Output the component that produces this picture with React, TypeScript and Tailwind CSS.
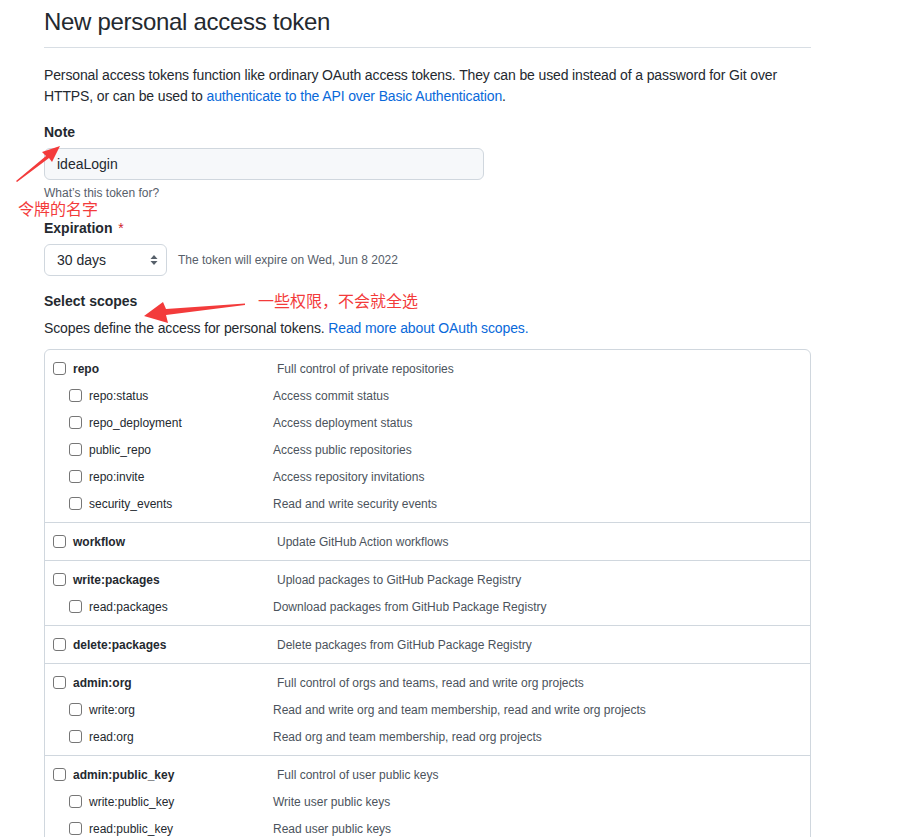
import React from 'react'

type Scope = { name: string; desc: string; children?: { name: string; desc: string }[] }

const scopes: Scope[] = [
  {
    name: 'repo',
    desc: 'Full control of private repositories',
    children: [
      { name: 'repo:status', desc: 'Access commit status' },
      { name: 'repo_deployment', desc: 'Access deployment status' },
      { name: 'public_repo', desc: 'Access public repositories' },
      { name: 'repo:invite', desc: 'Access repository invitations' },
      { name: 'security_events', desc: 'Read and write security events' },
    ],
  },
  { name: 'workflow', desc: 'Update GitHub Action workflows' },
  {
    name: 'write:packages',
    desc: 'Upload packages to GitHub Package Registry',
    children: [{ name: 'read:packages', desc: 'Download packages from GitHub Package Registry' }],
  },
  { name: 'delete:packages', desc: 'Delete packages from GitHub Package Registry' },
  {
    name: 'admin:org',
    desc: 'Full control of orgs and teams, read and write org projects',
    children: [
      { name: 'write:org', desc: 'Read and write org and team membership, read and write org projects' },
      { name: 'read:org', desc: 'Read org and team membership, read org projects' },
    ],
  },
  {
    name: 'admin:public_key',
    desc: 'Full control of user public keys',
    children: [
      { name: 'write:public_key', desc: 'Write user public keys' },
      { name: 'read:public_key', desc: 'Read user public keys' },
    ],
  },
]

function Box() {
  return <span className="inline-block w-[13px] h-[13px] shrink-0 rounded-[3px] border border-[#767676] bg-white" />
}

function ScopeGroup({ scope }: { scope: Scope }) {
  return (
    <div className="py-[5px] border-t border-[#d0d7de] first:border-t-0">
      <div className="flex items-center h-[27px] pl-2">
        <Box />
        <span className="ml-[7px] w-[204px] font-bold text-[12px] text-[#24292f]">{scope.name}</span>
        <span className="text-[12px] text-[#4b535c]">{scope.desc}</span>
      </div>
      {scope.children?.map((c) => (
        <div key={c.name} className="flex items-center h-[27px] pl-6">
          <Box />
          <span className="ml-[7px] w-[184px] text-[12px] text-[#24292f]">{c.name}</span>
          <span className="text-[12px] text-[#4b535c]">{c.desc}</span>
        </div>
      ))}
    </div>
  )
}

export default function App() {
  return (
    <div
      className="relative w-[913px] h-[837px] overflow-hidden bg-white text-[#24292f]"
      style={{ fontFamily: '"Liberation Sans", "Noto Sans CJK SC", sans-serif' }}
    >
      <div className="ml-[44px] w-[767px] pt-[7px]">
        <h1 className="text-[24px] leading-[30px] font-normal tracking-[-0.3px] pb-[10px] border-b border-[#d8dee4]">
          New personal access token
        </h1>
        <p className="mt-[17px] text-[14px] leading-[21px] tracking-[-0.13px]">
          Personal access tokens function like ordinary OAuth access tokens. They can be used instead of a password for Git over
          HTTPS, or can be used to <span className="text-[#0969da]">authenticate to the API over Basic Authentication</span>.
        </p>

        <div className="mt-[15px] text-[14px] leading-[21px] font-bold">Note</div>
        <div className="mt-[5px] w-[440px] h-[32px] rounded-md border border-[#d0d7de] bg-[#f6f8fa] flex items-center px-3 text-[14px]">
          ideaLogin
        </div>
        <div className="mt-1 text-[12px] leading-[18px] text-[#57606a]">What’s this token for?</div>

        <div className="mt-4 text-[14px] leading-[21px] font-bold">
          Expiration <span className="ml-[2px] font-normal text-[#cf222e]">*</span>
        </div>
        <div className="mt-[5px] flex items-center">
          <div className="w-[123px] h-[32px] rounded-md border border-[#d0d7de] bg-white flex items-center justify-between pl-3 pr-[8px] text-[14px]">
            <span>30 days</span>
            <svg width="8" height="12" viewBox="0 0 8 12">
              <path d="M4 1 L7.5 5 L0.5 5 Z M4 11 L7.5 7 L0.5 7 Z" fill="#57606a" />
            </svg>
          </div>
          <span className="ml-[11px] text-[12px] text-[#57606a]">The token will expire on Wed, Jun 8 2022</span>
        </div>

        <div className="mt-[15px] text-[14px] leading-[21px] font-bold">Select scopes</div>
        <p className="mt-[6px] text-[14px] leading-[21px] tracking-[-0.13px]">
          Scopes define the access for personal tokens. <span className="text-[#0969da]">Read more about OAuth scopes.</span>
        </p>

        <div className="mt-[10px] rounded-md border border-[#d0d7de]">
          {scopes.map((s) => (
            <ScopeGroup key={s.name} scope={s} />
          ))}
        </div>
      </div>

      <span className="absolute left-[18px] top-[200px] text-[16px] leading-[20px] text-[#f33b3b]">令牌的名字</span>
      <span className="absolute left-[258px] top-[292px] text-[16px] leading-[20px] text-[#f33b3b]">一些权限，不会就全选</span>

      <svg className="absolute left-0 top-0 pointer-events-none" width="913" height="837">
        <polygon points="16,181 46,156 42,152 60,146 52,162 49,158 17,182" fill="#f33b3b" />
        <polygon points="245,303.5 166,309 163,302 144,316 168,323 166,315 245,305" fill="#f33b3b" />
      </svg>
    </div>
  )
}
